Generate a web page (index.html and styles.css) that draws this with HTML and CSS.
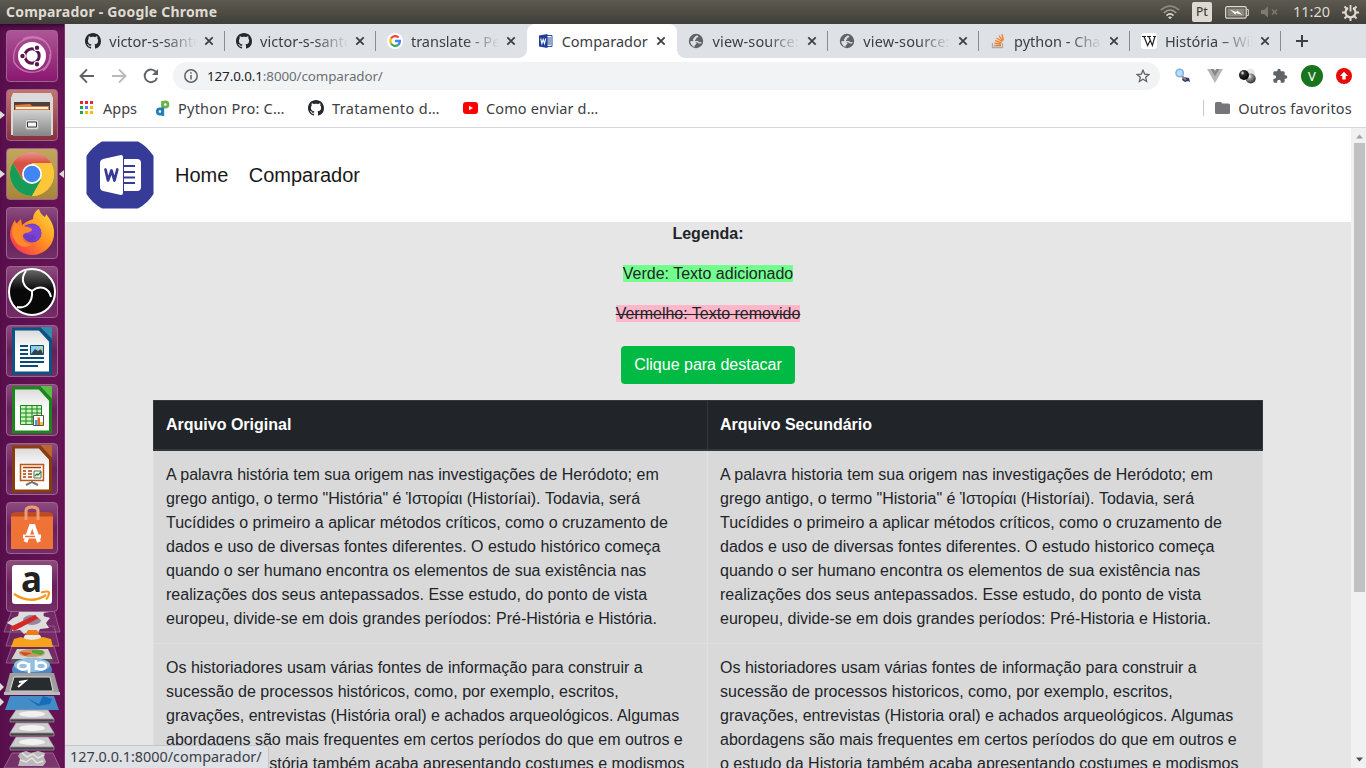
FILE: index.html
```html
<!DOCTYPE html>
<html lang="pt-BR">
<head>
<meta charset="utf-8">
<title>Comparador</title>
<link rel="stylesheet" href="styles.css">
</head>
<body>
<svg class="defs" width="0" height="0" aria-hidden="true">
  <defs>
    <linearGradient id="gloss" x1="0" y1="0" x2="0" y2="1"><stop offset="0" stop-color="#fff" stop-opacity=".4"/><stop offset="1" stop-color="#fff" stop-opacity="0"/></linearGradient>
    <linearGradient id="steel" x1="0" y1="0" x2="0" y2="1"><stop offset="0" stop-color="#d2d2d2"/><stop offset="1" stop-color="#858585"/></linearGradient>
    <linearGradient id="paper" x1="0" y1="0" x2="0" y2="1"><stop offset="0" stop-color="#d9d9d9"/><stop offset=".5" stop-color="#fff"/></linearGradient>
    <linearGradient id="fire" x1="1" y1="0" x2="0" y2="1"><stop offset="0" stop-color="#ffe23c"/><stop offset=".5" stop-color="#ff8b20"/><stop offset="1" stop-color="#f52060"/></linearGradient>
    <radialGradient id="ball" cx=".35" cy=".3" r=".7"><stop offset="0" stop-color="#fff"/><stop offset=".35" stop-color="#999"/><stop offset="1" stop-color="#333"/></radialGradient>
    <radialGradient id="darkball" cx=".35" cy=".3" r=".7"><stop offset="0" stop-color="#fff"/><stop offset=".3" stop-color="#333"/><stop offset="1" stop-color="#000"/></radialGradient>
    <symbol id="github" viewBox="0 0 16 16"><path fill="#24292e" fill-rule="evenodd" d="M8 0C3.58 0 0 3.58 0 8c0 3.54 2.29 6.53 5.47 7.59.4.07.55-.17.55-.38 0-.19-.01-.82-.01-1.49-2.01.37-2.53-.49-2.69-.94-.09-.23-.48-.94-.82-1.13-.28-.15-.68-.52-.01-.53.63-.01 1.08.58 1.23.82.72 1.21 1.87.87 2.33.66.07-.52.28-.87.51-1.07-1.78-.2-3.64-.89-3.64-3.95 0-.87.31-1.59.82-2.15-.08-.2-.36-1.02.08-2.12 0 0 .67-.21 2.2.82.64-.18 1.32-.27 2-.27s1.36.09 2 .27c1.53-1.04 2.2-.82 2.2-.82.44 1.1.16 1.92.08 2.12.51.56.82 1.27.82 2.15 0 3.07-1.87 3.75-3.65 3.95.29.25.54.73.54 1.48 0 1.07-.01 1.93-.01 2.2 0 .21.15.46.55.38A8.01 8.01 0 0 0 16 8c0-4.42-3.58-8-8-8z"/></symbol>
    <symbol id="globe" viewBox="0 0 16 16"><circle cx="8" cy="8" r="7.2" fill="#5f6368"/><path fill="#dee1e6" d="M2.300 8l4 .3 2.300 1.700-.6 1.500-1.300.5v2C4 13.200 2.300 11 2.300 8zM8.500 2.500l1.800.5-.2 1.300-2 .7.2 1.200-1.500.8.5 1h2.500l1.500 1.300 2.200-.2-.3 1.300-2.200.2-2-1.400L6 8.500 4.700 7l1.600-2.700z"/></symbol>
    <symbol id="close" viewBox="0 0 10 10"><path d="M1.300 1.300l7.400 7.400M8.700 1.300L1.300 8.700" stroke="#3c4043" stroke-width="1.800" fill="none"/></symbol>
  </defs>
</svg>
<div class="desktop">
  <header class="panel">
    <span class="panel-title">Comparador - Google Chrome</span>
    <div class="indicators">
      <svg class="wifi" width="20" height="15" viewBox="0 0 20 15" fill="none" stroke-width="1.600"><path d="M.8 5.200Q10-3 19.200 5.200" stroke="#8c8981"/><path d="M3.700 8Q10 2 16.300 8" stroke="#a5a198"/><path d="M6.500 10.600Q10 7.200 13.500 10.600" stroke="#dfdbd2"/><path d="M8 12.200L10 14.200 12 12.200Q10 10.600 8 12.200z" fill="#dfdbd2" stroke="none"/></svg>
      <span class="keyboard">Pt</span>
      <svg class="battery" width="24" height="13" viewBox="0 0 24 13"><rect x=".7" y=".7" width="20.500" height="11.500" rx="1.500" fill="none" stroke="#dfdbd2" stroke-width="1.300"/><path d="M22 3.500h1.300v6H22" fill="none" stroke="#dfdbd2"/><path d="M2.500 2.500h17v8h-17z" fill="#8c8981"/><path d="M5 3.500l6.500 2.800.5-2L17.500 9l-6.500-2-.5 1.800z" fill="#fff"/></svg>
      <svg class="mute" width="19" height="14" viewBox="0 0 19 14"><path d="M1 5h3l4-3.500v11L4 9H1z" fill="#7d7a72"/><path d="M12 4.500l5 5M17 4.500l-5 5" stroke="#7d7a72" stroke-width="1.600"/></svg>
      <span class="clock">11:20</span>
      <svg width="17" height="17" viewBox="0 0 17 17" fill="none" stroke="#dfdbd2"><path d="M6 4A5 5 0 1 0 11 4" stroke-width="2.200"/><path d="M8.500 1v6.500" stroke-width="1.800"/><path d="M0 8.500h3.500M13.500 8.500H17M8.500 13.500V17M2.500 2.500L5 5M14.500 2.500L12 5M2.500 14.500L5 12M14.500 14.500L12 12" stroke-width="2"/></svg>
    </div>
  </header>
  <div class="workspace">
    <aside class="launcher">
      <div class="tile ubuntu"><svg viewBox="0 0 52 52"><path d="M8 32C5 12 24 1 40 12M17 9c22-10 38 16 20 32M44 24c1 20-26 25-36 8" fill="none" stroke="#d58ac0" stroke-opacity=".7" stroke-width="1.500"/><circle cx="26" cy="26" r="14" fill="#fff"/><circle cx="26" cy="26" r="7.200" fill="none" stroke="#5b1550" stroke-width="3"/><g fill="#5b1550" stroke="#fff" stroke-width="1.200"><circle cx="16.500" cy="26" r="2.800"/><circle cx="31" cy="17.700" r="2.800"/><circle cx="31" cy="34.300" r="2.800"/></g></svg></div>
      <div class="tile files running"><svg viewBox="0 0 52 52"><path d="M7 4h38l2 5v37H5V9z" fill="#dadada"/><path d="M8 13h36v10H8z" fill="#4c4039"/><path d="M9 16l15-1 2 2h17v6H9z" fill="#e87b38"/><path d="M10 18h32v2H10z" fill="#fff2df"/><path d="M7 21h38v26H7z" fill="url(#steel)"/><rect x="19.500" y="30.500" width="13" height="10" rx="2" fill="#dedede" stroke="#aaa"/><path d="M21.500 33h9v5h-9z" fill="#f6f6f6" stroke="#333"/></svg></div>
      <div class="tile chrome running focused"><svg viewBox="0 0 52 52"><circle cx="26" cy="26" r="22" fill="#fbc738"/><path d="M6.950 15A22 22 0 0 1 45.050 15H26L16.500 31z" fill="#d85144"/><path d="M6.950 15A22 22 0 0 0 26 48l9.500-17L26 36 16.500 31.500z" fill="#169b58"/><path d="M26 15h19A22 22 0 0 1 26 48l9.500-16.500z" fill="#fbc738"/><path d="M6.950 15A22 22 0 0 1 45.050 15z" fill="url(#gloss)"/><circle cx="26" cy="26" r="10" fill="#fff"/><circle cx="26" cy="26" r="8.300" fill="#4285f4"/></svg></div>
      <div class="tile"><svg viewBox="0 0 52 52"><path d="M33 2c1 4 3 6 6 8 1-2 1-3 1-3 5 6 9 13 8 21-1 12-11 20-22 20S5 39 4 28c0-6 2-11 5-15l1 4 5-5 1 6c5-4 9-5 11-6 0-4 2-8 6-10z" fill="url(#fire)"/><circle cx="26" cy="26" r="9.500" fill="#6c3bc7"/><path d="M19 18c8-2 15 1 16 7 0 6-4 9-9 9 5-1 5-5 1-6-4 0-7-1-9-3z" fill="#7d43d6"/><path d="M9 15c5 6 12 3 17 7 0 4-7 3-9 6-2 5 3 9 9 9-6 5-14 3-18-5-3-6-2-12 1-17z" fill="#ff8a2a"/></svg></div>
      <div class="tile"><svg viewBox="0 0 52 52"><circle cx="26" cy="26" r="23" fill="#080808" stroke="#fff" stroke-width="2"/><path d="M5 24A21 21 0 0 1 47 24z" fill="url(#gloss)"/><g fill="none" stroke="#fff" stroke-width="2"><path d="M26 25C17 21 14 13 20 5"/><path d="M26 25c8-7 17-3 19 6"/><path d="M26 25c1 11-6 18-15 16"/></g></svg></div>
      <div class="tile"><svg viewBox="0 0 52 52"><path d="M7.500 4h26l11 12v32h-37z" fill="url(#paper)" stroke="#0b5382" stroke-width="3"/><path d="M34 2h12v13z" fill="#368aaf"/><path d="M33 3l12 12" stroke="#0b5382" stroke-width="3"/><path d="M14 21h8m-8 4h8m-8 4h8m-8 4h24m-24 4h24m-24 4h18" stroke="#0b4c77" stroke-width="2"/><path d="M24.500 20.500h13v9h-13z" fill="#8bd0ee" stroke="#0b4c77"/><path d="M25 29l4-5 3 2 3-2 2 5z" fill="#34434b"/><circle cx="35" cy="23" r="1.500" fill="#f2c94c"/></svg></div>
      <div class="tile"><svg viewBox="0 0 52 52"><path d="M7.500 4h26l11 12v32h-37z" fill="url(#paper)" stroke="#198719" stroke-width="3"/><path d="M34 2h12v13z" fill="#5dbb47"/><path d="M33 3l12 13" stroke="#198719" stroke-width="3"/><path d="M14.500 21.500h21v19h-21z" fill="#c9f3bf" stroke="#198719"/><path d="M14 25h22m-22 4h22m-22 4h22m-22 4h22M20 21v20m6-20v20m5-20v20" stroke="#198719"/><path d="M27.500 31.500h10v10h-10z" fill="#fff" stroke="#555"/><path d="M29 36h2.500v5H29z" fill="#3c9ce0"/><path d="M31.500 33.500H34V41h-2.500z" fill="#dd6724"/><path d="M34 38h3v3h-3z" fill="#f2c22f"/></svg></div>
      <div class="tile"><svg viewBox="0 0 52 52"><path d="M7.500 4h26l11 12v32h-37z" fill="url(#paper)" stroke="#8a3c0d" stroke-width="3"/><path d="M34 2h12v13z" fill="#bd6730"/><path d="M33 3l12 13" stroke="#8a3c0d" stroke-width="3"/><path d="M14.500 21.500h23v16h-23z" fill="#fff7ed" stroke="#b9571b" stroke-width="1.500"/><path d="M17 24.500h18M17 28h3m2 0h4m-9 3h3m2 0h4m-9 3h3m2 0h4" stroke="#a44313" stroke-width="1.700"/><path d="M28 28h7v7h-7z" fill="#eefbed" stroke="#666"/><path d="M29 33l2-2 1 1 3-3" fill="none" stroke="#1b8c28" stroke-width="1.300"/><path d="M26 38v1l-6 3m6-3l6 3" fill="none" stroke="#777" stroke-width="2"/></svg></div>
      <div class="tile"><svg viewBox="0 0 52 52"><path d="M5 12l4-2h34l4 2v5H5z" fill="#ba4b24"/><path d="M5 14.500h42V47H5z" fill="#ef7336"/><path d="M20 18V9q0-4 6-4t6 4v9" fill="none" stroke="#f29a70" stroke-width="3"/><path d="M19.500 40l5.500-16h2.500l5.500 16" fill="none" stroke="#fff" stroke-width="4"/><path d="M17 34.500h18" stroke="#fff" stroke-width="4"/><path d="M19 34.500h10" stroke="#ef7336" stroke-width="1.500"/></svg></div>
      <div class="tile amazon"><svg viewBox="0 0 52 52"><rect x="6" y="5" width="40" height="39" rx="3" fill="#fff"/><text x="25.500" y="31.500" text-anchor="middle" class="amazon-a">a</text><path d="M8 34q17 11 32 1" fill="none" stroke="#f7981d" stroke-width="2.600"/><path d="M35 32.500q8-2 8 0 0 4-3 7" fill="none" stroke="#f7981d" stroke-width="2"/></svg></div>
      <svg class="stack" width="64" height="160" viewBox="0 0 64 160">
        <g fill="#fff" fill-opacity=".1" stroke="#b77bad" stroke-opacity=".6"><path d="M12 2h42l6 22H4zM12 18h42l5 20H6zM12 38h42l5 17H6z"/></g>
        <path d="M13 10l5-2 1-4h5l2-3h9l2 3h7l-1 4 7 2-4 5 3 5-9 1-2 4-7-2-7 3-4-4-8 1 1-5-6-3z" fill="#dedede"/><ellipse cx="32" cy="12" rx="9" ry="5" fill="#99869b"/><path d="M10 19L35 7l4 3L14 23z" fill="#d22828"/><path d="M36 8l5-5 8 1-6 1 1 4 6 1-9 2z" fill="#ddd"/>
        <path d="M28 22h9l7 14H20z" fill="#ee7b16"/><path d="M25 27h15l3 6H22z" fill="#e9e9e9"/><path d="M14 31l7-2q10 6 22 0l8 2 2 8H11z" fill="#f6a31c"/>
        <path d="M17 41h31l5 11H11z" fill="#d1d1d1"/><ellipse cx="32" cy="45" rx="13" ry="4" fill="#c99762"/><path d="M32 42h9q6 2 0 5l-9-2z" fill="#4dab35"/><path d="M19 44l13 1-7 3z" fill="#d44824"/><path d="M11 51h42v3H11z" fill="#555"/>
        <ellipse cx="32" cy="62" rx="20" ry="12" fill="#4f86c4"/><ellipse cx="32" cy="57" rx="18" ry="7" fill="#92bfe2"/><g fill="none" stroke="#fff" stroke-width="2.500"><path d="M29 55v11M36 52v10"/><ellipse cx="23" cy="58" rx="5" ry="3.500"/><ellipse cx="41" cy="58" rx="5" ry="3.500"/></g>
        <path d="M10 65h44l6 22H4z" fill="#9e9e9e"/><path d="M14 69h36l3 14H10z" fill="#292c2e" stroke="#ddd"/><path d="M18 79l7-6-6 1" fill="none" stroke="#fff" stroke-width="2"/><path d="M4 84h56v3H4z" fill="#bbb"/>
        <path d="M10 88h44l5 14H5z" fill="#438cc8"/><path d="M27 90l12 6 4-8 9 3-2 5-12 2z" fill="#176eb7"/>
        <g stroke="#a797a7" stroke-width=".7"><path d="M16 102h32l6 9H10z" fill="#ccc"/><path d="M10 111h44v3H10z" fill="#444"/><path d="M16 115h32l6 10H10z" fill="#ccc"/><path d="M10 125h44v3H10z" fill="#444"/><path d="M16 129h32l6 10H10z" fill="#ccc"/><path d="M10 139h44v3H10z" fill="#444"/></g><g fill="#f1f1f1"><ellipse cx="32" cy="106" rx="13" ry="3"/><ellipse cx="32" cy="120" rx="13" ry="3"/><ellipse cx="32" cy="134" rx="13" ry="3"/></g>
        <path d="M12 145h41l7 15H4z" fill="#fff" fill-opacity=".15" stroke="#9b638e"/><path d="M20 145l6-2 5 2 7-2 7 2-1 4 2 5-3 4H18l2-7-2-3z" fill="#bdb8ba"/><path d="M22 145l5 4 6-3 5 4 6-3M20 152l6 2 6-4 5 5 6-2" fill="none" stroke="#e4e2e3" stroke-width="1.500"/>
        <path d="M0 75l4 4-4 4zM0 90l4 4-4 4z" fill="#ddd"/>
      </svg>
    </aside>

    <main class="browser">
      <div class="tabs">
        <div class="tab"><svg class="favicon"><use href="#github"/></svg><span>victor-s-santos</span><svg class="x"><use href="#close"/></svg></div>
        <div class="tab"><svg class="favicon"><use href="#github"/></svg><span>victor-s-santos</span><svg class="x"><use href="#close"/></svg></div>
        <div class="tab before-active"><svg class="favicon" viewBox="0 0 16 16"><circle cx="8" cy="8" r="8" fill="#fff"/><g fill="none" stroke-width="2.300"><path d="M4 5.500A5 5 0 0 1 11.600 4.500" stroke="#ea4335"/><path d="M4 5.500a5 5 0 0 0 0 5" stroke="#fbbc05"/><path d="M4 10.500a5 5 0 0 0 7.300 1.300" stroke="#34a853"/><path d="M11.300 11.800A5 5 0 0 0 12.900 8H8" stroke="#4285f4"/></g></svg><span>translate - Pesq</span><svg class="x"><use href="#close"/></svg></div>
        <div class="tab active"><svg class="favicon" viewBox="0 0 16 16"><path d="M8 2.500h6v11H8z" fill="#fff" stroke="#2a4d9b"/><path d="M9 5h4M9 7h4M9 9h4M9 11h4" stroke="#2a4d9b"/><path d="M1 2.500L9.500 1v14L1 13.500z" fill="#21409a"/><path d="M2.700 5.500l1.200 5 1.300-4 1.300 4 1.200-5" fill="none" stroke="#fff" stroke-width="1.100"/></svg><span>Comparador</span><svg class="x"><use href="#close"/></svg></div>
        <div class="tab"><svg class="favicon"><use href="#globe"/></svg><span class="source">view-source:12</span><svg class="x"><use href="#close"/></svg></div>
        <div class="tab"><svg class="favicon"><use href="#globe"/></svg><span class="source">view-source:12</span><svg class="x"><use href="#close"/></svg></div>
        <div class="tab"><svg class="favicon" viewBox="0 0 16 16"><path d="M2.500 10v4.500h10V10" fill="none" stroke="#aaa" stroke-width="1.300"/><path d="M4.500 12.500H11M4.500 10.200l6.500.8M5 7.700l6.300 2M6.500 5l5.700 3.500M9 2.700l4 5.400M12 1l1.300 6" stroke="#f48024" stroke-width="1.300"/></svg><span>python - Chang</span><svg class="x"><use href="#close"/></svg></div>
        <div class="tab"><svg class="favicon" viewBox="0 0 16 16"><rect width="16" height="16" rx="3" fill="#fff"/><path d="M1 3.500h4M6 3.500h4M12 3.500h3M3 3.500l3.600 9L9 7.800M7.800 3.500l3.600 9 2.500-9" fill="none" stroke="#222" stroke-width="1.200"/></svg><span>História – Wikip</span><svg class="x"><use href="#close"/></svg></div>
        <svg class="new-tab" width="12" height="12" viewBox="0 0 12 12"><path d="M6 0v12M0 6h12" stroke="#3c4043" stroke-width="2"/></svg>
      </div>
      <div class="toolbar">
        <svg width="16" height="16" viewBox="0 0 16 16" fill="none" stroke="#5f6368" stroke-width="1.900"><path d="M15 8H2M8 1.300L1.500 8 8 14.700"/></svg>
        <svg width="16" height="16" viewBox="0 0 16 16" fill="none" stroke="#b8babd" stroke-width="1.900"><path d="M1 8h13M8 1.300L14.500 8 8 14.700"/></svg>
        <svg width="16" height="16" viewBox="0 0 16 16" fill="none" stroke="#5f6368" stroke-width="1.900"><path d="M13.300 4.500A6.300 6.300 0 1 0 14 9.700"/><path d="M15 1v6H9z" fill="#5f6368" stroke="none"/></svg>
        <div class="address">
          <svg width="14" height="14" viewBox="0 0 14 14"><circle cx="7" cy="7" r="6.200" fill="none" stroke="#5f6368" stroke-width="1.500"/><path d="M7 6v4.500M7 3.300v1.500" stroke="#5f6368" stroke-width="1.500"/></svg>
          <span><b>127.0.0.1</b>:8000/comparador/</span>
          <svg class="star" width="14" height="14" viewBox="0 0 14 14"><path d="M7 1.200l1.700 3.900 4.200.4-3.200 2.800.9 4.200L7 10.300l-3.600 2.200.9-4.200L1.100 5.500l4.200-.4z" fill="none" stroke="#5f6368" stroke-width="1.300"/></svg>
        </div>
        <div class="extensions">
          <svg width="16" height="16" viewBox="0 0 16 16"><path d="M8 9l6 1 1 4-2-1-3 1-3-2z" fill="#283a73"/><path d="M6 7l5 5" stroke="#9a7c74" stroke-width="2"/><circle cx="4.700" cy="5" r="3.700" fill="#b5defa" stroke="#82aee0" stroke-width="1.500"/></svg>
          <svg width="16" height="16" viewBox="0 0 16 16"><path d="M0 1h4l4 7 4-7h4L8 15z" fill="#b7b7b7"/><path d="M3.500 1H7l1 2 1-2h3.500L8 8.500z" fill="#888"/></svg>
          <svg width="17" height="16" viewBox="0 0 17 16"><circle cx="11.500" cy="5" r="4.500" fill="#e8e8e8"/><circle cx="11.700" cy="10.500" r="5" fill="url(#ball)"/><circle cx="5" cy="7" r="5" fill="url(#darkball)"/></svg>
          <svg width="16" height="16" viewBox="0 0 24 24"><path d="M20.500 11H19V7c0-1.100-.9-2-2-2h-4V3.500a2.500 2.500 0 0 0-5 0V5H4c-1.100 0-2 .9-2 2v3.800h1.500a2.700 2.700 0 0 1 0 5.400H2V20c0 1.100.9 2 2 2h3.800v-1.500a2.700 2.700 0 0 1 5.400 0V22H17c1.100 0 2-.9 2-2v-4h1.500a2.500 2.500 0 0 0 0-5z" fill="#5f6368"/></svg>
          <span class="avatar">V</span>
          <svg width="16" height="16" viewBox="0 0 16 16"><circle cx="8" cy="8" r="8" fill="#e50b0b"/><path d="M8 3.700L12 8H9.700v3.500H6.300V8H4z" fill="#fff"/></svg>
        </div>
      </div>
      <div class="bookmarks">
        <a class="apps"><svg width="14" height="14" viewBox="0 0 14 14"><path d="M0 0h3v3H0zM5 0h3v3H5zM10 0h3v3h-3z" fill="#ea2335"/><path d="M0 5h3v3H0zM0 10h3v3H0z" fill="#19a558"/><path d="M5 5h3v3H5z" fill="#4f7df3"/><path d="M10 5h3v3h-3zM5 10h3v3H5zM10 10h3v3h-3z" fill="#fbbc05"/></svg><span>Apps</span></a>
        <a class="python"><svg width="14" height="16" viewBox="0 0 14 16"><g fill="none" stroke-width="2.700"><circle cx="9.300" cy="4.500" r="2.700" stroke="#68b34c"/><path d="M6.600 1v8" stroke="#68b34c"/><circle cx="4" cy="11.500" r="2.700" stroke="#247db3"/><path d="M6.800 7.500V16" stroke="#247db3"/></g></svg><span>Python Pro: C…</span></a>
        <a class="treat"><svg width="16" height="16"><use href="#github"/></svg><span>Tratamento d…</span></a>
        <a class="youtube"><svg width="15" height="12" viewBox="0 0 15 12"><rect width="15" height="12" rx="3" fill="#f00"/><path d="M6 3.700l4 2.300-4 2.300z" fill="#fff"/></svg><span>Como enviar d…</span></a>
        <a class="other"><svg width="15" height="12" viewBox="0 0 15 12"><path d="M1.500 0H6l1.500 1.500h6Q15 1.500 15 3v7.500Q15 12 13.500 12h-12Q0 12 0 10.500v-9Q0 0 1.500 0z" fill="#757679"/></svg><span>Outros favoritos</span></a>
      </div>
      <div class="viewport">
        <div class="page">
          <nav class="navbar">
            <svg width="68" height="68" viewBox="0 0 68 68"><path d="M16 .5h36Q61 5 67.500 15v38Q62 62 52 67.500H16Q6 62 .5 53V15Q6 6 16 .5z" fill="#373b98"/><path d="M38 18h13q4 0 4 4v24q0 4-4 4H38z" fill="#fff"/><path d="M38 25h11M38 31h11M38 36.500h11M38 42h11" stroke="#373b98" stroke-width="2"/><path d="M17 18l18-4q2 0 2 2v36q0 2-2 2l-18-4q-3-1-3-4V22q0-3 3-4z" fill="#fff"/><path d="M19.500 28.500l2.500 11 3.500-10 3 10 2.800-11" fill="none" stroke="#373b98" stroke-width="2.700" stroke-linejoin="round" stroke-linecap="round"/></svg>
            <a>Home</a><a>Comparador</a>
          </nav>
          <section class="legend">
            <strong>Legenda:</strong>
            <p><ins>Verde: Texto adicionado</ins></p>
            <p><del>Vermelho: Texto removido</del></p>
            <button>Clique para destacar</button>
          </section>
          <table>
            <colgroup><col class="original"><col></colgroup>
            <thead><tr><th>Arquivo Original</th><th>Arquivo Secundário</th></tr></thead>
            <tbody>
              <tr>
                <td>A palavra história tem sua origem nas investigações de Heródoto; em<br>grego antigo, o termo "História" é Ἱστορίαι (Historíai). Todavia, será<br>Tucídides o primeiro a aplicar métodos críticos, como o cruzamento de<br>dados e uso de diversas fontes diferentes. O estudo histórico começa<br>quando o ser humano encontra os elementos de sua existência nas<br>realizações dos seus antepassados. Esse estudo, do ponto de vista<br>europeu, divide-se em dois grandes períodos: Pré-História e História.</td>
                <td>A palavra historia tem sua origem nas investigações de Heródoto; em<br>grego antigo, o termo "Historia" é Ἱστορίαι (Historíai). Todavia, será<br>Tucídides o primeiro a aplicar métodos críticos, como o cruzamento de<br>dados e uso de diversas fontes diferentes. O estudo historico começa<br>quando o ser humano encontra os elementos de sua existência nas<br>realizações dos seus antepassados. Esse estudo, do ponto de vista<br>europeu, divide-se em dois grandes períodos: Pré-Historia e Historia.</td>
              </tr>
              <tr>
                <td>Os historiadores usam várias fontes de informação para construir a<br>sucessão de processos históricos, como, por exemplo, escritos,<br>gravações, entrevistas (História oral) e achados arqueológicos. Algumas<br>abordagens são mais frequentes em certos períodos do que em outros e<br>o estudo da História também acaba apresentando costumes e modismos</td>
                <td>Os historiadores usam várias fontes de informação para construir a<br>sucessão de processos historicos, como, por exemplo, escritos,<br>gravações, entrevistas (Historia oral) e achados arqueológicos. Algumas<br>abordagens são mais frequentes em certos períodos do que em outros e<br>o estudo da Historia também acaba apresentando costumes e modismos</td>
              </tr>
            </tbody>
          </table>
        </div>
        <div class="scrollbar">
          <svg width="9" height="5" viewBox="0 0 9 5"><path d="M1 4.500L4.500.5 8 4.500z" fill="#a3a3a3"/></svg>
          <div class="thumb"></div>
          <svg class="down" width="9" height="5" viewBox="0 0 9 5"><path d="M1 .5h7L4.500 4.500z" fill="#505050"/></svg>
        </div>
        <div class="status">127.0.0.1:8000/comparador/</div>
      </div>
    </main>
  </div>
</div>
</body>
</html>
```
FILE: styles.css
```css
* { box-sizing: border-box; }
body { margin: 0; overflow: hidden; font-family: "Noto Sans", sans-serif; color: #3c4043; }
svg { display: block; flex: none; }
.defs { position: absolute; }
.desktop { width: 1366px; height: 768px; display: flex; flex-direction: column; overflow: hidden; }

.panel { height: 24px; flex: none; display: flex; align-items: center; padding: 0 7px 0 6px; background: linear-gradient(#5d5a50, #3f3e39); color: #dfdbd2; }
.panel-title { font-size: 14px; font-weight: bold; line-height: 24px; letter-spacing: .2px; white-space: nowrap; }
.indicators { margin-left: auto; display: flex; align-items: center; }
.keyboard { width: 20px; height: 20px; margin-left: 12px; border-radius: 2px; background: #dfdbd2; color: #45433e; font-size: 12px; font-weight: 500; line-height: 20px; text-align: center; }
.battery { margin-left: 13px; }
.mute { margin-left: 11px; }
.clock { width: 38px; margin: 0 11px 0 14px; font-size: 14.5px; line-height: 22px; height: 24px; white-space: nowrap; }

.workspace { height: 744px; display: flex; }
.launcher { width: 65px; flex: none; padding: 6px 0 0 6px; display: flex; flex-direction: column; gap: 7px; background: linear-gradient(90deg, #580f4c, #671356); border-right: 1px solid #862e75; box-shadow: inset 0 5px 5px -3px #300529; }
.tile { width: 52px; height: 52px; flex: none; position: relative; border: 1px solid #9b6590; border-radius: 4px; background: linear-gradient(#8c4b7d, #68205b 50%, #722e66); }
.tile > svg { width: 52px; height: 52px; margin: -1px; }
.ubuntu { background: linear-gradient(#ac5595, #8b1771); }
.files { background: linear-gradient(#c4756e, #87303e); }
.chrome { background: linear-gradient(#c1a660, #a78639); }
.running::before { content: ""; position: absolute; left: -7px; top: 21px; border: 4px solid transparent; border-left: 5px solid #ddd; border-right: 0; }
.focused::after { content: ""; position: absolute; right: -7px; top: 21px; border: 4px solid transparent; border-right: 5px solid #ddd; border-left: 0; }
.amazon { margin-top: -1px; }
.amazon-a { font: bold 35px "Noto Sans", sans-serif; fill: #222; }
.stack { margin: -11px 0 0 -6px; }

.browser { width: 1301px; flex: none; display: flex; flex-direction: column; background: #fff; }
.tabs { height: 34px; flex: none; display: flex; padding-left: 9.3px; background: #dee1e6; }
.tab { width: 150.8px; height: 34px; flex: none; display: flex; align-items: center; padding: 0 11px; position: relative; }
.tab::after { content: ""; position: absolute; right: 0; top: 7px; width: 1px; height: 20px; background: #898b90; }
.tab .favicon { width: 16px; height: 16px; }
.tab span { width: 88px; margin-left: 8px; overflow: hidden; white-space: nowrap; font-size: 14.5px; line-height: 34px; -webkit-mask-image: linear-gradient(90deg, #000 62%, transparent 100%); mask-image: linear-gradient(90deg, #000 62%, transparent 100%); }
.tab .source { letter-spacing: .15px; }
.tab .x { width: 10px; height: 10px; margin-left: 7px; }
.tab.active { background: #fff; border-radius: 8px 8px 0 0; }
.tab.active::before { content: ""; position: absolute; left: -8px; right: -8px; bottom: 0; height: 8px; background: radial-gradient(circle at 0 0, transparent 7.5px, #fff 8px) 0 0 / 8px 8px no-repeat, radial-gradient(circle at 100% 0, transparent 7.5px, #fff 8px) 100% 0 / 8px 8px no-repeat; }
.tab.active span { -webkit-mask-image: none; mask-image: none; }
.tab.active::after, .before-active::after { display: none; }
.new-tab { margin: 11px 0 0 15px; }

.toolbar { height: 36px; flex: none; display: flex; align-items: center; padding: 0 14px; gap: 16px; }
.address { width: 989px; height: 28px; display: flex; align-items: center; margin-left: -2px; padding: 0 10px 0 11px; border-radius: 14px; background: #f1f3f4; }
.address span { margin-left: 9px; font-size: 13.4px; letter-spacing: -.1px; white-space: nowrap; color: #6b6f74; }
.address b { font-weight: normal; color: #202124; }
.star { margin-left: auto; }
.extensions { display: flex; align-items: center; gap: 16px; margin-left: -1px; }
.avatar { width: 22px; height: 22px; margin: 0 -3px; border-radius: 50%; background: #1a731d; color: #fff; font-size: 13px; line-height: 22px; text-align: center; }

.bookmarks { height: 34px; flex: none; display: flex; align-items: center; padding: 0 14px 5px 15px; border-bottom: 1px solid #d6d8dc; font-size: 14.5px; white-space: nowrap; }
.bookmarks a { display: flex; align-items: center; flex: none; }
.bookmarks span { line-height: 18px; margin-top: -1px; }
.apps { width: 76px; gap: 9px; }
.python { width: 152px; gap: 8px; letter-spacing: .23px; }
.treat { width: 155px; gap: 8px; letter-spacing: .33px; }
.youtube { gap: 8px; letter-spacing: .12px; }
.other { margin-left: auto; height: 16px; border-left: 1px solid #c7c9cc; padding-left: 11px; gap: 8px; letter-spacing: .2px; }

.viewport { height: 640px; flex: none; position: relative; display: flex; overflow: hidden; }
.page { width: 1286px; flex: none; height: 640px; overflow: hidden; background: #e6e6e6; color: #212529; font-family: "Liberation Sans", Arial, sans-serif; font-size: 16px; line-height: 24px; }
.navbar { height: 94px; display: flex; align-items: center; padding-left: 21px; background: #fff; font-size: 20px; line-height: 30px; }
.navbar a { margin-left: 21px; color: #181818; }
.navbar a + a { margin-left: 20.4px; }
.legend { height: 178px; text-align: center; }
.legend p { margin: 16px 0; }
.legend strong { display: block; }
ins { text-decoration: none; background: #73ff8d; }
del { background: #ffb6c8; }
.legend button { display: block; width: 174px; height: 38px; margin: 20px auto 0; border: 0; border-radius: 4px; background: #00ba43; color: #fff; font: 16px/24px "Liberation Sans", Arial, sans-serif; padding: 7px 12px; }
table { width: 1110px; margin: 0 auto; border-collapse: collapse; table-layout: fixed; background: #d9d9d9; }
.original { width: 554px; }
th, td { padding: 12px; border: 1px solid #dedfe0; vertical-align: top; text-align: left; white-space: nowrap; }
th { background: #212529; color: #fff; border-color: #32383e; border-bottom-width: 2px; }

.scrollbar { width: 15px; display: flex; flex-direction: column; align-items: center; padding: 6px 1px 6px 2px; background: #f1f1f1; }
.thumb { width: 11px; height: 449px; margin-top: 4px; background: #c1c1c1; }
.down { margin-top: auto; }
.status { position: absolute; left: 0; bottom: 0; width: 204px; height: 23px; padding-left: 5px; border: 1px solid #c3c5ca; border-width: 1px 1px 0 0; border-radius: 0 4px 0 0; background: #dee1e6; font-size: 14.4px; line-height: 22px; white-space: nowrap; }
```
